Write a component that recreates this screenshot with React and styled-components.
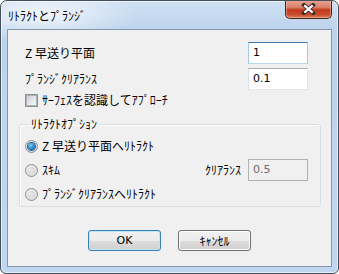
import React from "react";
import styled, { createGlobalStyle } from "styled-components";

const Global = createGlobalStyle`
  html, body { margin: 0; padding: 0; background: #ffffff; }
  body { font-family: "Noto Sans CJK JP", "Noto Sans", sans-serif; }
  * { box-sizing: border-box; }
`;

const Window = styled.div`
  width: 339px;
  height: 274px;
  border: 1px solid #44505e;
  border-radius: 7px 7px 6px 6px;
  background:
    radial-gradient(ellipse 140px 40px at 40px 14px, rgba(255,255,255,0.75), rgba(255,255,255,0) 70%),
    linear-gradient(to bottom, #cfe0f3 0px, #bcd3ec 30px, #c1d7ef 100%);
  box-shadow: inset 0 0 0 1px rgba(255, 255, 255, 0.55);
  display: flex;
  flex-direction: column;
  padding: 0 6px 6px 6px;
  overflow: hidden;
`;

const TitleBar = styled.div`
  height: 28px;
  display: flex;
  align-items: flex-start;
  justify-content: space-between;
`;

const Title = styled.div`
  font-size: 12px;
  line-height: 14px;
  color: #000;
  padding: 8px 0 0 1px;
`;

const CloseButton = styled.div`
  width: 47px;
  height: 19px;
  margin-top: -1px;
  border: 1px solid #4a2118;
  border-top: none;
  border-radius: 0 0 5px 5px;
  background: linear-gradient(to bottom, #e8a493 0%, #d9826c 40%, #c2391e 55%, #c84a2c 80%, #d9805c 100%);
  box-shadow: inset 0 0 0 1px rgba(255, 210, 190, 0.45);
  display: flex;
  align-items: center;
  justify-content: center;
`;

const Client = styled.div`
  flex: 1;
  border: 1px solid #8397ad;
  background: #f0f0f0;
  padding: 12px 10px 0 11px;
  display: flex;
  flex-direction: column;
`;

const FormGrid = styled.div`
  display: grid;
  grid-template-columns: 1fr 60px;
  row-gap: 4px;
  padding: 0 13px 0 6px;
  align-items: center;
`;

const Label = styled.span`
  font-size: 12px;
  line-height: 14px;
  color: #000;
  white-space: nowrap;
`;

const TextBox = styled.div`
  width: 60px;
  height: 22px;
  border: 1px solid;
  border-color: ${p => (p.$focus ? "#3d7bad #a4c9e3 #b7d9ed #a4c9e3" : p.$disabled ? "#adb2b5" : "#abadb3 #e2e3ea #e3e9ef #dbdfe6")};
  background: ${p => (p.$disabled ? "#f0f0f0" : "#ffffff")};
  color: ${p => (p.$disabled ? "#6d6d6d" : "#000")};
  font-family: "DejaVu Sans", sans-serif;
  font-size: 11px;
  line-height: 20px;
  padding-left: 4px;
`;

const CheckRow = styled.div`
  display: flex;
  align-items: center;
  gap: 4px;
  margin: 3px 0 0 6px;
`;

const CheckBox = styled.span`
  width: 13px;
  height: 13px;
  border: 1px solid #8e8f8f;
  background: #f4f4f4;
  display: flex;
  align-items: center;
  justify-content: center;
  &::after {
    content: "";
    width: 9px;
    height: 9px;
    border: 1px solid #aeb3b9;
    background: linear-gradient(135deg, #cbcfd5 0%, #e6e8eb 60%, #f6f6f6 100%);
  }
`;

const Group = styled.fieldset`
  margin: 10px 0 0 0;
  padding: 3px 12px 0 5px;
  border: 1px solid #d5dfe5;
  border-radius: 3px;
  box-shadow: inset 1px 1px 0 #ffffff;
  min-width: 0;
`;

const Legend = styled.legend`
  font-size: 12px;
  line-height: 14px;
  padding: 0 2px;
  margin-left: 4px;
  color: #000;
`;

const RadioRow = styled.div`
  height: 24px;
  display: flex;
  align-items: center;
  gap: 4px;
`;

const Radio = styled.span`
  width: 13px;
  height: 13px;
  border-radius: 50%;
  border: 1px solid #8e8f8f;
  background: radial-gradient(circle at 40% 40%, #f8f8f8 0%, #dcdcdc 70%, #cfcfcf 100%);
  display: flex;
  align-items: center;
  justify-content: center;
  flex-shrink: 0;
  &::after {
    content: "";
    width: 7px;
    height: 7px;
    border-radius: 50%;
    background: ${p =>
      p.$checked
        ? "radial-gradient(circle at 40% 35%, #8ad6f8 0%, #2e8fd0 45%, #0d4f8a 100%)"
        : "radial-gradient(circle at 40% 40%, #e9e9e9 0%, #d0d0d0 100%)"};
    box-shadow: ${p => (p.$checked ? "0 0 0 1px #1c5f95" : "none")};
  }
`;

const Spacer = styled.span`
  flex: 1;
`;

const SideLabel = styled(Label)`
  margin-right: 3px;
`;

const ButtonRow = styled.div`
  display: flex;
  justify-content: center;
  gap: 17px;
  margin-top: 23px;
  padding-right: 1px;
`;

const Button = styled.div`
  width: 73px;
  height: 21px;
  border: 1px solid ${p => (p.$default ? "#3c7fb1" : "#707070")};
  border-radius: 3px;
  background: linear-gradient(to bottom, #f2f2f2 0%, #ebebeb 50%, #dddddd 51%, #cfcfcf 100%);
  box-shadow: inset 0 0 0 1px ${p => (p.$default ? "#bde6fb" : "#fcfcfc")};
  display: flex;
  align-items: center;
  justify-content: center;
  font-size: 12px;
  line-height: 14px;
  color: #000;
`;

const OkText = styled.span`
  font-family: "DejaVu Sans", sans-serif;
  font-size: 11px;
`;

export default function App() {
  return (
    <>
      <Global />
      <Window>
        <TitleBar>
          <Title>ﾘﾄﾗｸﾄとﾌﾟﾗﾝｼﾞ</Title>
          <CloseButton>
            <svg width="15" height="12" viewBox="0 0 15 12">
              <path d="M3 2 L12 10 M12 2 L3 10" stroke="#3a2a28" strokeWidth="4" strokeLinecap="square" />
              <path d="M3.3 2.3 L11.7 9.7 M11.7 2.3 L3.3 9.7" stroke="#ffffff" strokeWidth="2.2" />
            </svg>
          </CloseButton>
        </TitleBar>
        <Client>
          <FormGrid>
            <Label>Z 早送り平面</Label>
            <TextBox $focus>1</TextBox>
            <Label>ﾌﾟﾗﾝｼﾞｸﾘｱﾗﾝｽ</Label>
            <TextBox>0.1</TextBox>
          </FormGrid>
          <CheckRow>
            <CheckBox />
            <Label>ｻｰﾌｪｽを認識してｱﾌﾟﾛｰﾁ</Label>
          </CheckRow>
          <Group>
            <Legend>ﾘﾄﾗｸﾄｵﾌﾟｼｮﾝ</Legend>
            <RadioRow>
              <Radio $checked />
              <Label>Z 早送り平面へﾘﾄﾗｸﾄ</Label>
            </RadioRow>
            <RadioRow>
              <Radio />
              <Label>ｽｷﾑ</Label>
              <Spacer />
              <SideLabel>ｸﾘｱﾗﾝｽ</SideLabel>
              <TextBox $disabled>0.5</TextBox>
            </RadioRow>
            <RadioRow>
              <Radio />
              <Label>ﾌﾟﾗﾝｼﾞｸﾘｱﾗﾝｽへﾘﾄﾗｸﾄ</Label>
            </RadioRow>
          </Group>
          <ButtonRow>
            <Button $default><OkText>OK</OkText></Button>
            <Button>ｷｬﾝｾﾙ</Button>
          </ButtonRow>
        </Client>
      </Window>
    </>
  );
}
